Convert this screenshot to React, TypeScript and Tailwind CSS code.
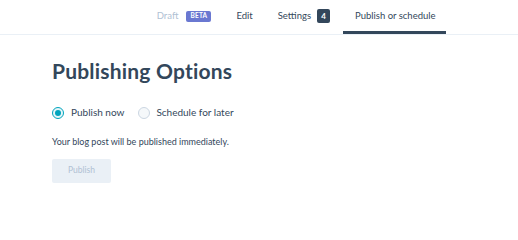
export default function App() {
  return (
    <div className="w-[518px] h-[204px] bg-white text-[#33475b] font-['Lato',sans-serif]">
      <nav className="flex h-[35px] items-end justify-end border-b border-[#eaf0f6] pr-[72px] text-[9.5px]">
        <div className="flex h-[34px] items-center pb-[2px] text-[#b0c1d4]">
          <span>Draft</span>
          <span className="ml-[8px] flex h-[11px] w-[25px] items-center justify-center rounded-[2px] bg-[#6a78d1] text-[6.5px] font-bold tracking-wide text-white">
            BETA
          </span>
        </div>
        <div className="ml-[25px] flex h-[34px] items-center pb-[2px]">Edit</div>
        <div className="ml-[25px] flex h-[34px] items-center pb-[2px]">
          <span>Settings</span>
          <span className="ml-[6px] flex h-[14px] w-[13px] items-center justify-center rounded-[2px] bg-[#33475b] text-[8px] font-bold text-white">
            4
          </span>
        </div>
        <div className="ml-[13px] flex h-[34px] w-[103px] items-center border-b-[3px] border-[#33475b] pl-[12px] pt-[1px]">
          Publish or schedule
        </div>
      </nav>
      <main className="px-[52px] pt-[24px]">
        <h1 className="text-[21px] font-bold leading-[24px] tracking-[0.2px]">Publishing Options</h1>
        <div className="mt-[22px] flex items-center text-[10px]">
          <label className="flex items-center">
            <span className="flex h-[12px] w-[12px] items-center justify-center rounded-full border border-[#00a4bd] bg-[#e5f5f8]">
              <span className="h-[6px] w-[6px] rounded-full bg-[#00a4bd]" />
            </span>
            <span className="ml-[7px]">Publish now</span>
          </label>
          <label className="ml-[14px] flex items-center">
            <span className="h-[12px] w-[12px] rounded-full border border-[#cbd6e2] bg-[#f5f8fa]" />
            <span className="ml-[6px]">Schedule for later</span>
          </label>
        </div>
        <p className="mt-[15px] text-[9px]">Your blog post will be published immediately.</p>
        <button className="mt-[10px] h-[24px] w-[59px] rounded-[2px] bg-[#eaf0f6] text-[8.5px] text-[#b0c1d4]">
          Publish
        </button>
      </main>
    </div>
  );
}
